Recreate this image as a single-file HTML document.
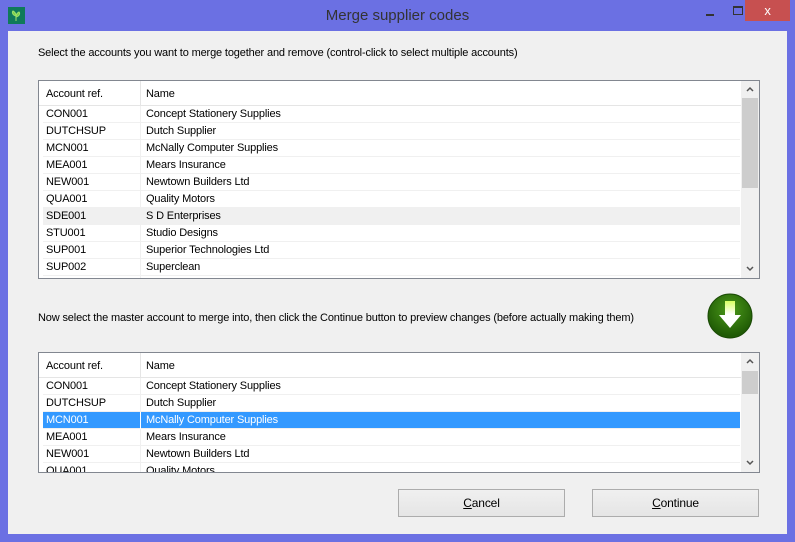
<!DOCTYPE html>
<html><head><style>
*{margin:0;padding:0;box-sizing:border-box}
body{width:795px;height:542px;background:#6b70e3;font-family:"Liberation Sans",sans-serif;font-size:11px;letter-spacing:-0.15px;color:#000;position:relative;overflow:hidden}
.abs{position:absolute}
.content{left:8px;top:31px;width:779px;height:503px;background:#f0f0f0}
.title{left:0;top:0;width:795px;height:31px;text-align:center;line-height:31px;font-size:15px;color:#333;letter-spacing:0}
.list{background:#fff;border:1px solid #828790}
.hdr{position:absolute;left:0;top:0;height:25px;border-bottom:1px solid #e5e5e5;}
.hdr span{position:absolute;top:7px}
.row{position:absolute;left:4px;height:17px;width:697px;border-bottom:1px solid #f0f0f0}
.row span{position:absolute;top:2px}
.c1{left:3px}.c2{left:103px}
.sb{position:absolute;right:0;top:0;width:18px;background:#f0f0f0}
.btn{border:1px solid #acacac;background:linear-gradient(#f0f0f0,#e5e5e5);text-align:center;line-height:26px;font-size:12px}
</style></head><body>
<div class="abs title">Merge supplier codes</div>
<div class="abs" style="left:8px;top:7px;width:17px;height:17px;background:#0f7a5a"><svg width="17" height="17"><path d="M8 14 L8 8 M8 9 C4 8 4 5 5 4 C7 5 8 7 8 9 M8 10 C12 9 12 6 11 5 C9 6 8 8 8 10" stroke="#9be36a" fill="#7ccf4c" stroke-width="1"/></svg></div>
<div class="abs" style="left:706px;top:14px;width:8px;height:2px;background:#333"></div>
<div class="abs" style="left:733px;top:6px;width:10px;height:9px;border:1px solid #333;border-top-width:2px"></div>
<div class="abs" style="left:745px;top:0;width:45px;height:21px;background:#c75050;color:#fff;text-align:center;line-height:21px;font-size:13px">x</div>
<div class="abs content"></div>
<div class="abs" style="left:38px;top:47px">Select the accounts you want to merge together and remove (control-click to select multiple accounts)</div>

<div class="abs list" style="left:38px;top:80px;width:722px;height:199px;overflow:hidden">
 <div class="hdr" style="width:702px"><span style="left:7px">Account ref.</span><span style="left:107px">Name</span><div class="abs" style="left:101px;top:0;width:1px;height:24px;background:#e5e5e5"></div></div>
 <div class="abs" style="left:101px;top:25px;width:1px;height:175px;background:#f0f0f0"></div>
 <div class="row" style="top:25px"><span class="c1">CON001</span><span class="c2">Concept Stationery Supplies</span></div>
 <div class="row" style="top:42px"><span class="c1">DUTCHSUP</span><span class="c2">Dutch Supplier</span></div>
 <div class="row" style="top:59px"><span class="c1">MCN001</span><span class="c2">McNally Computer Supplies</span></div>
 <div class="row" style="top:76px"><span class="c1">MEA001</span><span class="c2">Mears Insurance</span></div>
 <div class="row" style="top:93px"><span class="c1">NEW001</span><span class="c2">Newtown Builders Ltd</span></div>
 <div class="row" style="top:110px"><span class="c1">QUA001</span><span class="c2">Quality Motors</span></div>
 <div class="row" style="top:127px;background:#f0f0f0"><span class="c1">SDE001</span><span class="c2">S D Enterprises</span></div>
 <div class="row" style="top:144px"><span class="c1">STU001</span><span class="c2">Studio Designs</span></div>
 <div class="row" style="top:161px"><span class="c1">SUP001</span><span class="c2">Superior Technologies Ltd</span></div>
 <div class="row" style="top:178px"><span class="c1">SUP002</span><span class="c2">Superclean</span></div>
 <div class="sb" style="height:197px"><svg class="abs" style="left:5px;top:5px" width="8" height="6"><path d="M1 5 L4 2 L7 5" stroke="#555" stroke-width="1.5" fill="none"/></svg><div class="abs" style="left:1px;top:17px;width:16px;height:90px;background:#cdcdcd"></div><svg class="abs" style="left:5px;top:185px" width="8" height="6"><path d="M1 1 L4 4 L7 1" stroke="#555" stroke-width="1.5" fill="none"/></svg></div>
</div>

<div class="abs" style="left:38px;top:312px">Now select the master account to merge into, then click the Continue button to preview changes (before actually making them)</div>
<svg class="abs" style="left:705px;top:292px" width="50" height="50"><defs><radialGradient id="g" cx="50%" cy="35%" r="60%"><stop offset="0" stop-color="#4c9a1a"/><stop offset="1" stop-color="#1f5a05"/></radialGradient><linearGradient id="a" x1="0" y1="0" x2="0" y2="1"><stop offset="0" stop-color="#d8ff60"/><stop offset=".5" stop-color="#fff"/></linearGradient></defs><circle cx="25" cy="24" r="22" fill="url(#g)" stroke="#1a4a05"/><path d="M20 9 H30 V23 H36 L25 36 L14 23 H20 Z" fill="url(#a)"/></svg>

<div class="abs list" style="left:38px;top:352px;width:722px;height:121px;overflow:hidden">
 <div class="hdr" style="width:702px"><span style="left:7px">Account ref.</span><span style="left:107px">Name</span><div class="abs" style="left:101px;top:0;width:1px;height:24px;background:#e5e5e5"></div></div>
 <div class="abs" style="left:101px;top:25px;width:1px;height:100px;background:#f0f0f0"></div>
 <div class="row" style="top:25px"><span class="c1">CON001</span><span class="c2">Concept Stationery Supplies</span></div>
 <div class="row" style="top:42px"><span class="c1">DUTCHSUP</span><span class="c2">Dutch Supplier</span></div>
 <div class="row" style="top:59px;background:#3399ff;color:#fff"><span class="c1">MCN001</span><span class="c2">McNally Computer Supplies</span><div class="abs" style="left:97px;top:0;width:1px;height:17px;background:#fff"></div></div>
 <div class="row" style="top:76px"><span class="c1">MEA001</span><span class="c2">Mears Insurance</span></div>
 <div class="row" style="top:93px"><span class="c1">NEW001</span><span class="c2">Newtown Builders Ltd</span></div>
 <div class="row" style="top:110px"><span class="c1">QUA001</span><span class="c2">Quality Motors</span></div>
 <div class="sb" style="height:119px"><svg class="abs" style="left:5px;top:5px" width="8" height="6"><path d="M1 5 L4 2 L7 5" stroke="#555" stroke-width="1.5" fill="none"/></svg><div class="abs" style="left:1px;top:18px;width:16px;height:23px;background:#cdcdcd"></div><svg class="abs" style="left:5px;top:107px" width="8" height="6"><path d="M1 1 L4 4 L7 1" stroke="#555" stroke-width="1.5" fill="none"/></svg></div>
</div>

<div class="abs btn" style="left:398px;top:489px;width:167px;height:28px"><u>C</u>ancel</div>
<div class="abs btn" style="left:592px;top:489px;width:167px;height:28px"><u>C</u>ontinue</div>
</body></html>
